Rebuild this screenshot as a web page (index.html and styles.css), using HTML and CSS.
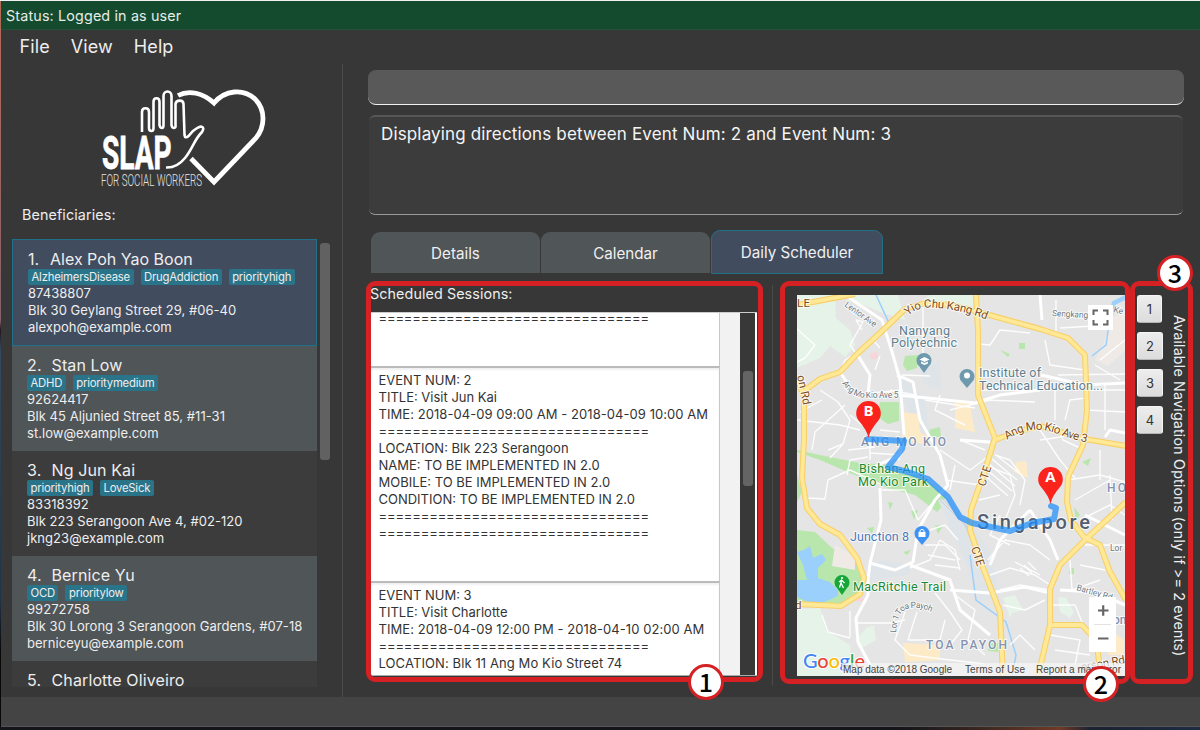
FILE: index.html
```html
<!DOCTYPE html>
<html lang="en">
<head>
<meta charset="utf-8">
<title>SLAP for Social Workers</title>
<link rel="stylesheet" href="styles.css">
</head>
<body>
<div class="desktop">
<div class="window">
  <div class="status">Status: Logged in as user</div>
  <div class="menu"><span>File</span><span>View</span><span>Help</span></div>
  <div class="main">
    <aside class="side">
      <svg class="logo" width="190" height="115" viewBox="90 80 190 115" fill="none" stroke="#fff">
        <path stroke-width="4.800" d="M178 95.500C189 89.500 203 93 214 103C225 90 243 88 255 99C266 110 265 127 256 138L214 182L191 158.500"/>
        <path stroke-width="2.600" d="M142 132V112C142 107 149 107 149 112V128Q149 131 151.500 131Q153.500 131 153.500 128V102C153.500 97 159.500 97 159.500 102V125Q160 128 162 128Q163.500 128 163.500 125V96C163.500 90 171.500 90 171.500 96V125Q172 128 174 128Q176 128 175.500 125V104C176 99.500 183.500 99.500 183.500 104L184.500 135Q185 139 188.500 136L193 131Q198 127 201 126.500Q205 127.500 202 132C194 140 193 148 185 158Q177 168 166 167.500"/>
        <text class="logo-name" x="102" y="168.500" textLength="69.500" lengthAdjust="spacingAndGlyphs">SLAP</text>
        <text class="logo-sub" x="101" y="186" textLength="101" lengthAdjust="spacingAndGlyphs">FOR SOCIAL WORKERS</text>
      </svg>
      <div class="side-title">Beneficiaries:</div>
      <div class="people-row">
        <div class="people">
          <div class="person selected"><div class="name"><span class="num">1.</span>Alex Poh Yao Boon</div><div class="tags"><b>AlzheimersDisease</b><b>DrugAddiction</b><b>priorityhigh</b></div><p>87438807</p><p>Blk 30 Geylang Street 29, #06-40</p><p>alexpoh@example.com</p></div>
          <div class="person even"><div class="name"><span class="num">2.</span>Stan Low</div><div class="tags"><b>ADHD</b><b>prioritymedium</b></div><p>92624417</p><p>Blk 45 Aljunied Street 85, #11-31</p><p>st.low@example.com</p></div>
          <div class="person"><div class="name"><span class="num">3.</span>Ng Jun Kai</div><div class="tags"><b>priorityhigh</b><b>LoveSick</b></div><p>83318392</p><p>Blk 223 Serangoon Ave 4, #02-120</p><p>jkng23@example.com</p></div>
          <div class="person even"><div class="name"><span class="num">4.</span>Bernice Yu</div><div class="tags"><b>OCD</b><b>prioritylow</b></div><p>99272758</p><p>Blk 30 Lorong 3 Serangoon Gardens, #07-18</p><p>berniceyu@example.com</p></div>
          <div class="person last"><div class="name"><span class="num">5.</span>Charlotte Oliveiro</div></div>
        </div>
        <div class="people-thumb"></div>
      </div>
    </aside>
    <section class="content">
      <div class="command"></div>
      <div class="result">Displaying directions between Event Num: 2 and Event Num: 3</div>
      <div class="tabs"><div class="tab">Details</div><div class="tab">Calendar</div><div class="tab active">Daily Scheduler</div></div>
      <div class="panes">
        <div class="sessions">
          <div class="sessions-title">Scheduled Sessions:</div>
          <div class="session-box">
            <div class="cells">
              <div class="cell first"><p class="eq">================================</p></div>
              <div class="cell"><p>EVENT NUM: 2</p><p>TITLE: Visit Jun Kai</p><p class="time">TIME: 2018-04-09 09:00 AM - 2018-04-09 10:00 AM</p><p class="eq">================================</p><p>LOCATION: Blk 223 Serangoon</p><p>NAME: TO BE IMPLEMENTED IN 2.0</p><p>MOBILE: TO BE IMPLEMENTED IN 2.0</p><p>CONDITION: TO BE IMPLEMENTED IN 2.0</p><p class="eq">================================</p><p class="eq">================================</p></div>
              <div class="cell"><p>EVENT NUM: 3</p><p>TITLE: Visit Charlotte</p><p class="time">TIME: 2018-04-09 12:00 PM - 2018-04-10 02:00 AM</p><p class="eq">================================</p><p class="wide">LOCATION: Blk 11 Ang Mo Kio Street 74</p></div>
            </div>
            <div class="cell-gap"></div>
            <div class="session-scroll"><div class="session-thumb"></div></div>
          </div>
        </div>
        <svg class="map" width="329" height="381" viewBox="797 295 329 381">
          <rect x="797" y="295" width="329" height="381" fill="#e5e5e5"/>
          <!-- parks -->
          <g fill="#e6f3e8">
            <path d="M797 295H835L836 318L850 330L855 345L845 357L830 346L820 358L797 368Z"/>
            <path d="M840 295H898L905 320L880 312Z M930 295H973V306L920 302Z"/>
            <path d="M797 609L820 608L826 630L850 645L853 676H797Z M866 628L874 625L876 640L862 648L856 640Z"/>
            <path d="M1003 598L1015 595L1023 610L1012 613L1010 618Z M1058 597L1066 598L1074 612L1070 618L1060 612Z"/>
          </g>
          <g fill="#b9e6ad">
            <path d="M797 450L820 455L860 463L895 465L925 478L948 500L937 512L915 495L887 488L850 473L820 460L797 452Z"/>
            <path d="M797 530L815 532L832 548L850 555L862 570L862 590L842 604L797 604Z"/>
            <path d="M880 402H899V421L888 424L878 417Z M905 356L919 355L917 368L907 371L903 365Z M928 430L940 427L941 437H928Z M911 511L918 510L914 520ZM888 502L893 503L890 510ZM935 525L943 526L938 534ZM867 528L874 527L872 534ZM1000 350L1010 354L1008 357ZM1019 343H1025V349H1019ZM1082 462L1091 458L1088 466ZM1074 507L1080 515L1076 520ZM1070 568H1074V574H1069Z"/>
            <path d="M797 475L802 492L797 502ZM903 552L911 550L907 555ZM989 643H1001L998 652L988 651Z"/>
          </g>
          <path fill="#9bd0fc" d="M797 552L804 550L810 546L813 558L822 554L826 560L818 568V578L830 582L838 590L838 596L820 604L810 603L797 597V580L807 580L803 565Z"/>
          <g fill="#dfe4e9"><path d="M900 374L925 400L930 432L915 425L900 395ZM870 565L885 560L910 565V575L870 580Z M920 370L940 360L942 390L925 385Z M938 500L952 498L990 552L1000 600L980 600L965 560Z"/></g>
          <g fill="#fdebc8"><path d="M901 412L918 414L920 432L932 440L925 445L903 438ZM955 400L970 405L975 432L955 428ZM903 643L940 645V660L905 662ZM1016 462L1026 461L1028 478L1014 472ZM1110 630L1124 640V655H1108Z"/></g>
          <path fill="#efeae6" d="M1112 318L1126 310V350L1108 366L1095 360L1105 340Z M835 545L855 556V570L832 566Z"/>
          <path fill="#f7d5da" d="M870 354L877 351L878 358L871 360ZM850 600L866 597L864 602Z"/>
          <g fill="none" stroke="#9bd0fc" stroke-width="1.500">
            <path d="M876 295L889 323M970 555L976 600L1006 622L1016 655L1012 676"/>
            <path stroke-width="4.500" d="M1126 297L1114 303L1110 318"/><path d="M1110 318L1106 345L1092 356"/>
          </g>
          <!-- rail yard -->
          <g stroke="#ccd1d8" fill="none"><path d="M938 498L965 525L985 575M942 498L970 530L990 580M947 499L975 540"/></g>
          <!-- local streets -->
          <g fill="none" stroke="#fff" stroke-width="1.400" stroke-opacity=".9" stroke-linejoin="round">
            <path d="M797 329L815 345L805 358L797 362M820 390L838 402L850 420L843 444L828 450M797 420L840 425L860 430M812 450L815 432L845 405M856 354L873 340L880 348M855 352L850 345L863 322L856 320L862 330M880 356L875 370M843 444L830 458M822 400L800 412M840 372L845 360L852 356"/>
            <path d="M868 457L850 460L847 475M870 453L902 455M848 450L875 447M870 430V460M880 430L900 432M850 415L862 425M902 375L930 376M923 360V300M890 390L915 395M903 390L870 393M940 395L935 410L965 425M925 400L975 408"/>
            <path d="M808 498L825 499L828 480L850 470L882 485M882 490H905L918 520L935 500M822 615L828 632L850 638M850 611V637M940 540L930 560L910 568M940 540L955 550L960 570M905 612L895 640L910 655L950 660L985 664M935 593L950 612L962 630L950 645M955 595L975 610L968 640L985 655M917 612L908 640L940 640L945 620M925 545L945 545L960 560M928 555L955 560M935 565L960 568M930 530L945 525L958 540M856 623H890L905 620"/>
            <path d="M979 344L990 345L1000 330L1030 333M982 390H1040M985 400L1035 402M1045 340L1050 365L1085 370M1058 375L1125 374M1056 333V300M1060 328L1110 325M1100 360L1125 340M1095 365L1120 380M1088 390H1125M1105 385V430M1086 410L1125 412M1055 388V420M1065 420L1070 400L1086 398M1056 425L1063 440L1080 448M1040 430L1060 460L1075 478M995 455L1010 460L1025 480L1020 505M992 468L1010 475L1015 495L1005 520M979 500L1000 495M1000 515L990 535L1010 545M988 560L1005 540L1030 545L1050 560M990 575L1010 568L1035 575L1050 585M1015 562L1040 575M1000 590L1020 585L1050 590M1068 480L1100 475L1125 482M1075 500L1110 480M1080 520L1110 505L1125 515M1110 475L1112 520M1100 450V480M1040 440L1075 435M1085 545L1125 545M1070 560L1072 590L1100 580M1080 565L1105 570M1003 605L1025 610L1045 600M1010 645L1020 635L1035 650M1053 605L1075 605L1082 622M1050 635L1080 640L1075 665M1055 650L1090 655M960 440L985 450M940 450L970 470L990 455M955 465L950 490M945 480L980 485M950 410L990 400"/>
            <path d="M983 474L1008 496M986 469L1012 491M989 464L1015 486M992 459L1017 480M996 455L1020 474"/>
            <path d="M1020 568L1029 576M1024 565L1032 573M1028 562L1036 570"/>
          </g>
          <g fill="none" stroke="#fff" stroke-width="3" stroke-linejoin="round">
            <path d="M845 295L882 320L893 355L900 380L904 435M897 375L913 382L920 420L940 455L948 485L935 500L918 530L913 562L895 570L870 563L868 580L868 595L856 618L858 642L870 665L870 676M880 488L881 520L870 563M864 585L855 598M898 395L975 403L1000 395L1040 390M857 354L870 375L868 395M840 372L852 390M867 470L900 455M903 440L898 460"/>
            <path d="M1040 295L1042 320M1041 375L1085 385L1125 383M960 440L990 442M950 590L990 593L1025 587L1050 593M990 565L1000 540L1030 510M1030 510L1050 540L1058 560M1060 590L1095 592L1125 605M1085 515L1125 535M1105 437L1110 430L1125 433M910 565L950 580L960 610L990 635"/>
          </g>
          <!-- arterial roads -->
          <defs><path id="roads" d="M797 305L855 294M797 378L804 397L804 440L802 478L807 508L820 524L840 535L857 558L864 578L860 594L841 606L797 604M804 391L820 379L840 372L857 354L880 333L905 309L925 303L950 305L975 311L1040 329L1068 338L1085 355L1087 410L1083 445L1068 477M976 295L978 330L978 395L995 438L985 470L971 510L970 530L982 565L1000 612L1003 676M995 440L1015 432L1040 426L1085 439L1126 446M1126 502L1085 540L1060 565L1050 589L1050 625L1043 655L1038 676M1068 477L1067 502L1071 520L1084 537L1100 545L1110 572L1126 600M1050 625L1082 625L1096 640L1100 668L1120 676"/></defs>
          <g fill="none" stroke-linejoin="round">
            <use href="#roads" stroke="#f8d06a" stroke-width="6"/>
            <use href="#roads" stroke="#ffe896" stroke-width="3.800"/>
          </g>
          <!-- labels -->
          <g class="lbl road">
            <text x="797" y="307" textLength="13">LE</text>
            <path id="p1" d="M908 316Q918 306 935 308Q960 309 987 320" fill="none" stroke="none"/>
            <text><textPath href="#p1" textLength="82">Yio Chu Kang Rd</textPath></text>
            <path id="p2" d="M1007 440Q1030 424 1055 433Q1075 440 1089 443" fill="none" stroke="none"/>
            <text><textPath href="#p2" textLength="83">Ang Mo Kio Ave 3</textPath></text>
            <text transform="translate(797 376) rotate(78)" textLength="30">on Rd</text>
            <text transform="translate(985 487) rotate(-72)" textLength="21">CTE</text>
            <text transform="translate(971 548) rotate(72)" textLength="20">CTE</text>
            <text transform="translate(1082 671) rotate(-10)" textLength="44">erson Rd</text>
            <text x="795" y="609">d</text>
          </g>
          <g class="lbl street">
            <text transform="translate(844 306) rotate(35)" textLength="37">Lentor Ave</text>
            <path id="p3" d="M842 383Q852 399 870 398H902" fill="none" stroke="none"/>
            <text><textPath href="#p3" textLength="62">Ang Mo Kio Ave 5</textPath></text>
            <text transform="translate(1052 316) rotate(3)" textLength="36">Sengkang</text><text transform="translate(1113 312) rotate(15)">Ke</text>
            <path id="p4" d="M896 633Q897 608 912 608Q923 607 933 613" fill="none" stroke="none"/>
            <text><textPath href="#p4" textLength="53">Lor 1 Toa Payoh</textPath></text>
            <text x="1110" y="551">Lor 4</text>
            <text transform="translate(1076 590) rotate(16)" textLength="37">Bartley Rd</text>
          </g>
          <g class="lbl town"><text x="861" y="446" textLength="85">ANG MO KIO</text><text x="926" y="649" textLength="81">TOA PAYOH</text><text x="1107" y="492" textLength="19">HO</text><text x="1113" y="624">om</text></g>
          <g class="lbl poi"><text x="899" y="335" textLength="51">Nanyang</text><text x="891" y="347" textLength="66">Polytechnic</text><text x="979" y="377" textLength="62">Institute of</text><text x="979" y="390" textLength="124">Technical Education...</text></g>
          <g class="lbl park"><text x="859" y="473" textLength="66">Bishan-Ang</text><text x="858" y="486" textLength="70">Mo Kio Park</text><text x="853" y="591" textLength="93">MacRitchie Trail</text></g>
          <g class="lbl mall"><text x="850" y="541" textLength="59">Junction 8</text></g>
          <text class="lbl city" x="977" y="529" textLength="113">Singapore</text>
          <!-- place pins -->
          <g fill="#6f9aae"><path d="M924 373L919 366A7.500 7.500 0 1 1 929 366Z"/><path d="M967 388L962 382A7.500 7.500 0 1 1 972 382Z"/></g>
          <path fill="#fff" d="M919.500 359.500L924.500 357L929.500 359.500L924.500 362ZM921 361.500L924.500 363L928 361.500V363.500L924.500 365L921 363.500Z"/><circle cx="967" cy="375.500" r="3" fill="#fff"/>
          <path fill="#3d93f5" d="M922 545L917 539A7.500 7.500 0 1 1 927 539Z"/><path fill="none" stroke="#fff" d="M920 532V530.500Q922 528 924 530.500V532"/><rect x="918.500" y="532" width="7" height="5" fill="#fff"/>
          <path fill="#17a63a" d="M842 595L837 588A7.500 7.500 0 1 1 847 588Z"/><g stroke="#fff" fill="none" stroke-width="1.300"><path d="M841.500 579.500L841 583L839.500 587.500M841 583L843.500 588M839 582L841.500 580L844.500 583"/></g><circle cx="842" cy="578" r="1.100" fill="#fff"/>
          <!-- route -->
          <path d="M868 439L904 441L902 449L888 467L908 472L928 479L948 497L960 517L972 523L1010 531L1032 523L1054 519L1056 508L1051 506" fill="none" stroke="#1e8dfa" stroke-opacity=".72" stroke-width="6" stroke-linejoin="round" stroke-linecap="round"/>
          <g fill="#fb241c"><path d="M868.500 438Q867 430 859 421A12.300 12.300 0 1 1 878 421Q870 430 868.500 438Z"/><path d="M1050.500 504Q1049 496 1041 487A12.300 12.300 0 1 1 1060 487Q1052 496 1050.500 504Z"/></g>
          <g class="pin"><text x="868.500" y="416">B</text><text x="1050.500" y="482">A</text></g>
          <!-- controls -->
          <rect x="1088" y="305" width="25" height="25" fill="#fff"/>
          <path d="M1093.500 315V310.500H1098M1103 310.500H1107.500V315M1107.500 320V324.500H1103M1098 324.500H1093.500V320" fill="none" stroke="#666" stroke-width="2"/>
          <rect x="1089" y="597" width="27" height="55" rx="1" fill="#fff"/><path d="M1094 624.500H1111" stroke="#e3e3e3"/>
          <path d="M1098 610.500H1108.500M1103.200 605.200V615.800M1098 638.500H1108.500" stroke="#666" stroke-width="2.200"/>
          <text class="google" y="668" x="803" textLength="62"><tspan fill="#4285f4">G</tspan><tspan fill="#ea4335">o</tspan><tspan fill="#fbbc05">o</tspan><tspan fill="#4285f4">g</tspan><tspan fill="#34a853">l</tspan><tspan fill="#ea4335">e</tspan></text>
          <rect x="842" y="663" width="284" height="13" fill="#f5f5f5" fill-opacity=".72"/>
          <g class="credit"><text x="843" y="673" textLength="109">Map data ©2018 Google</text><text x="965" y="673" textLength="60">Terms of Use</text><text x="1036" y="673" textLength="85">Report a map error</text></g>
        </svg>
        <div class="nav"><button class="one">1</button><button>2</button><button>3</button><button>4</button></div>
        <div class="nav-title">Available Navigation Options (only if &gt;= 2 events)</div>
      </div>
    </section>
  </div>
  <div class="footer"></div>
</div>
<div class="mark mark-1"></div><div class="mark mark-2"></div><div class="mark mark-3"></div>
<div class="dot dot-1">1</div><div class="dot dot-2">2</div><div class="dot dot-3">3</div>
</div>
</body>
</html>
```
FILE: styles.css
```css
* { box-sizing: border-box; }
body { margin: 0; background: #17181c; font-family: Inter, "Liberation Sans", sans-serif; color: #eee; }
p { margin: 0; }
.desktop { position: relative; width: 1200px; height: 730px; overflow: hidden; padding: 1px 0 0 1px;
  background: linear-gradient(#f1f1f1 0 1px, transparent 1px), linear-gradient(90deg, #14151b 0 900px, #392720 980px, #713a26 1060px, #1b2230 1090px, #1d2b44) 0 727px / 100% 3px no-repeat, linear-gradient(#b96a57 0, #85616b 320px, #20161b 330px, #34495f 350px, #203448 600px, #080809 650px); }
.window { width: 1199px; height: 726px; background: #373737; display: flex; flex-direction: column; }
.status { height: 29px; background: #144b2e; border-bottom: 1px solid #245138; padding-left: 5px; font-size: 14.3px; letter-spacing: .16px; line-height: 30px; color: #e6ede8; white-space: nowrap; }
.menu { height: 34px; display: flex; gap: 21px; padding-left: 18.5px; font-size: 18px; letter-spacing: .1px; line-height: 34px; }
.main { flex: 1; display: flex; min-height: 0; }
.side { width: 342px; border-right: 1px solid #4c4c4c; display: flex; flex-direction: column; }
.logo { margin: 16px 0 0 89px; flex: none; }
.logo-name { font: bold 47px Roboto, sans-serif; fill: #fff; stroke: #fff; stroke-width: .8px; }
.logo-sub { font: 300 16px Roboto, sans-serif; fill: #e4e4e4; stroke: none; }
.side-title { margin-left: 21px; height: 44px; line-height: 40px; font-size: 14.3px; letter-spacing: .12px; }
.people-row { display: flex; padding-left: 11px; gap: 3px; height: 448px; }
.people { width: 305px; height: 448px; overflow: hidden; }
.people-thumb { width: 10px; height: 217px; margin-top: 4px; border-radius: 3px; background: #616161; }
.person { height: 105px; padding: 9px 0 0 15px; background: #3c3c3d; font-size: 13px; letter-spacing: .04px; line-height: 17px; white-space: nowrap; }
.person.even { background: #505557; }
.person.last { height: 29px; padding-top: 9px; }
.person.selected { height: 107px; background: #414c5f; border: 1px solid #207187; }
.name { font-size: 16px; letter-spacing: .12px; line-height: 20px; height: 20px; }
.num { display: inline-block; width: 24.5px; }
.selected .num { width: 22px; }
.selected .name { letter-spacing: 0; }
.tags { display: flex; gap: 7px; height: 16px; }
.tags b { font-weight: 400; font-size: 11.3px; letter-spacing: -.2px; line-height: 17px; background: #2a748a; border-radius: 2px; padding: 0 3.5px; }
.content { flex: 1; display: flex; flex-direction: column; padding: 6px 0 0 25px; }
.command { width: 816px; height: 35px; border-radius: 8px; background: #595959; border-bottom: 1.5px solid #f0f0f0; }
.result { width: 814px; height: 100px; margin: 10px 0 0 1px; border-radius: 6px; background: #3c3c3c; border-top: 2px solid #575757; border-bottom: 1px solid #999; padding: 7px 0 0 12px; font-size: 17px; letter-spacing: .15px; line-height: 20px; color: #f4f4f4; white-space: nowrap; }
.tabs { display: flex; align-items: flex-end; gap: 1px; height: 44px; margin: 15px 0 0 3px; }
.tab { width: 169px; height: 41px; margin-bottom: 1px; border-radius: 9px 9px 0 0; background: #505557; font-size: 15.2px; line-height: 43px; text-align: center; color: #f0f0f0; }
.tab.active { width: 172px; height: 44px; margin-bottom: 0; background: #414c5f; border: 1px solid #207187; }
.panes { display: flex; margin-left: 2px; height: 412px; align-items: flex-start; }
.sessions { width: 403px; height: 401px; margin-top: 11px; border-right: 1px solid #4a4a4a; }
.sessions-title { height: 27px; line-height: 18px; font-size: 14.3px; letter-spacing: .1px; white-space: nowrap; }
.session-box { display: flex; width: 387px; height: 364px; background: #fff; border-top: 1px solid #ccc; border-bottom: 1px solid #aaa; overflow: hidden; color: #333; }
.cells { width: 350px; }
.cell { height: 215px; padding: 4px 0 0 8.5px; border-top: 2px solid #bbb; border-right: 1px solid #c8c8c8; background: #fff; font-size: 13px; line-height: 17px; white-space: nowrap; box-shadow: inset 0 2px 2px #f0f0f0; }
.cell.first { height: 53px; padding-top: 0; border-top: 0; box-shadow: none; line-height: 11px; }
.eq { letter-spacing: -.15px; }
.time { letter-spacing: .06px; }
.wide { letter-spacing: .1px; }
.cell-gap { width: 20px; background: #f2f2f2; }
.session-scroll { width: 15px; background: #383838; padding: 58px 0 0 3px; }
.session-thumb { width: 10px; height: 115px; border-radius: 3px; background: #646464; }
.map { flex: none; margin: 21px 0 0 24px; font-family: Roboto, sans-serif; }
.lbl { stroke: #fff; stroke-width: 2px; stroke-opacity: .75; paint-order: stroke; font-size: 11.5px; }
.road { fill: #7b4d23; }
.street { fill: #6b7780; font-size: 8.5px; }
.town { fill: #8492ae; font-size: 12px; font-weight: 500; }
.poi { fill: #5d7f8f; font-size: 12.5px; }
.park { fill: #198a32; font-size: 12.5px; }
.mall { fill: #4979bd; font-size: 12.5px; }
.city { fill: #535f70; font-size: 20px; font-weight: 500; }
.pin { fill: #fff; font: bold 15px "Open Sans", sans-serif; text-anchor: middle; }
.google { font: 500 20px Lato, sans-serif; stroke: #fff; stroke-width: 2px; paint-order: stroke; }
.credit { fill: #444; font: 10px "Liberation Sans", sans-serif; }
.nav { display: flex; flex-direction: column; gap: 9px; margin: 21px 0 0 11px; width: 27px; flex: none; }
.nav button { width: 26px; height: 28px; padding: 0; border: 1px solid #f5f5f5; border-bottom-color: #b5b5b5; border-radius: 3px; background: linear-gradient(#ededed, #dcdcdc); font: 13px Inter, sans-serif; color: #333; }
.nav button.one { width: 25px; }
.nav-title { writing-mode: vertical-rl; margin: 41px 0 0 5px; width: 20px; line-height: 20px; font-size: 14.3px; letter-spacing: .17px; white-space: nowrap; }
.footer { height: 30px; background: #444; border-bottom: 1px solid #555; }
.mark { position: absolute; border: 5px solid #d52024; border-radius: 9px; top: 281px; }
.mark-1 { left: 366px; width: 397px; height: 401px; }
.mark-2 { left: 780px; width: 350px; height: 403px; }
.mark-3 { left: 1130px; width: 63px; height: 403px; }
.dot { position: absolute; width: 36px; height: 36px; border: 3px solid #d52024; border-radius: 50%; background: #fff; color: #000; font: 500 25px/28px "Noto Sans CJK SC", sans-serif; text-align: center; }
.dot-1 { left: 688px; top: 664px; }
.dot-2 { left: 1083px; top: 666px; }
.dot-3 { left: 1157px; top: 255px; }
```
